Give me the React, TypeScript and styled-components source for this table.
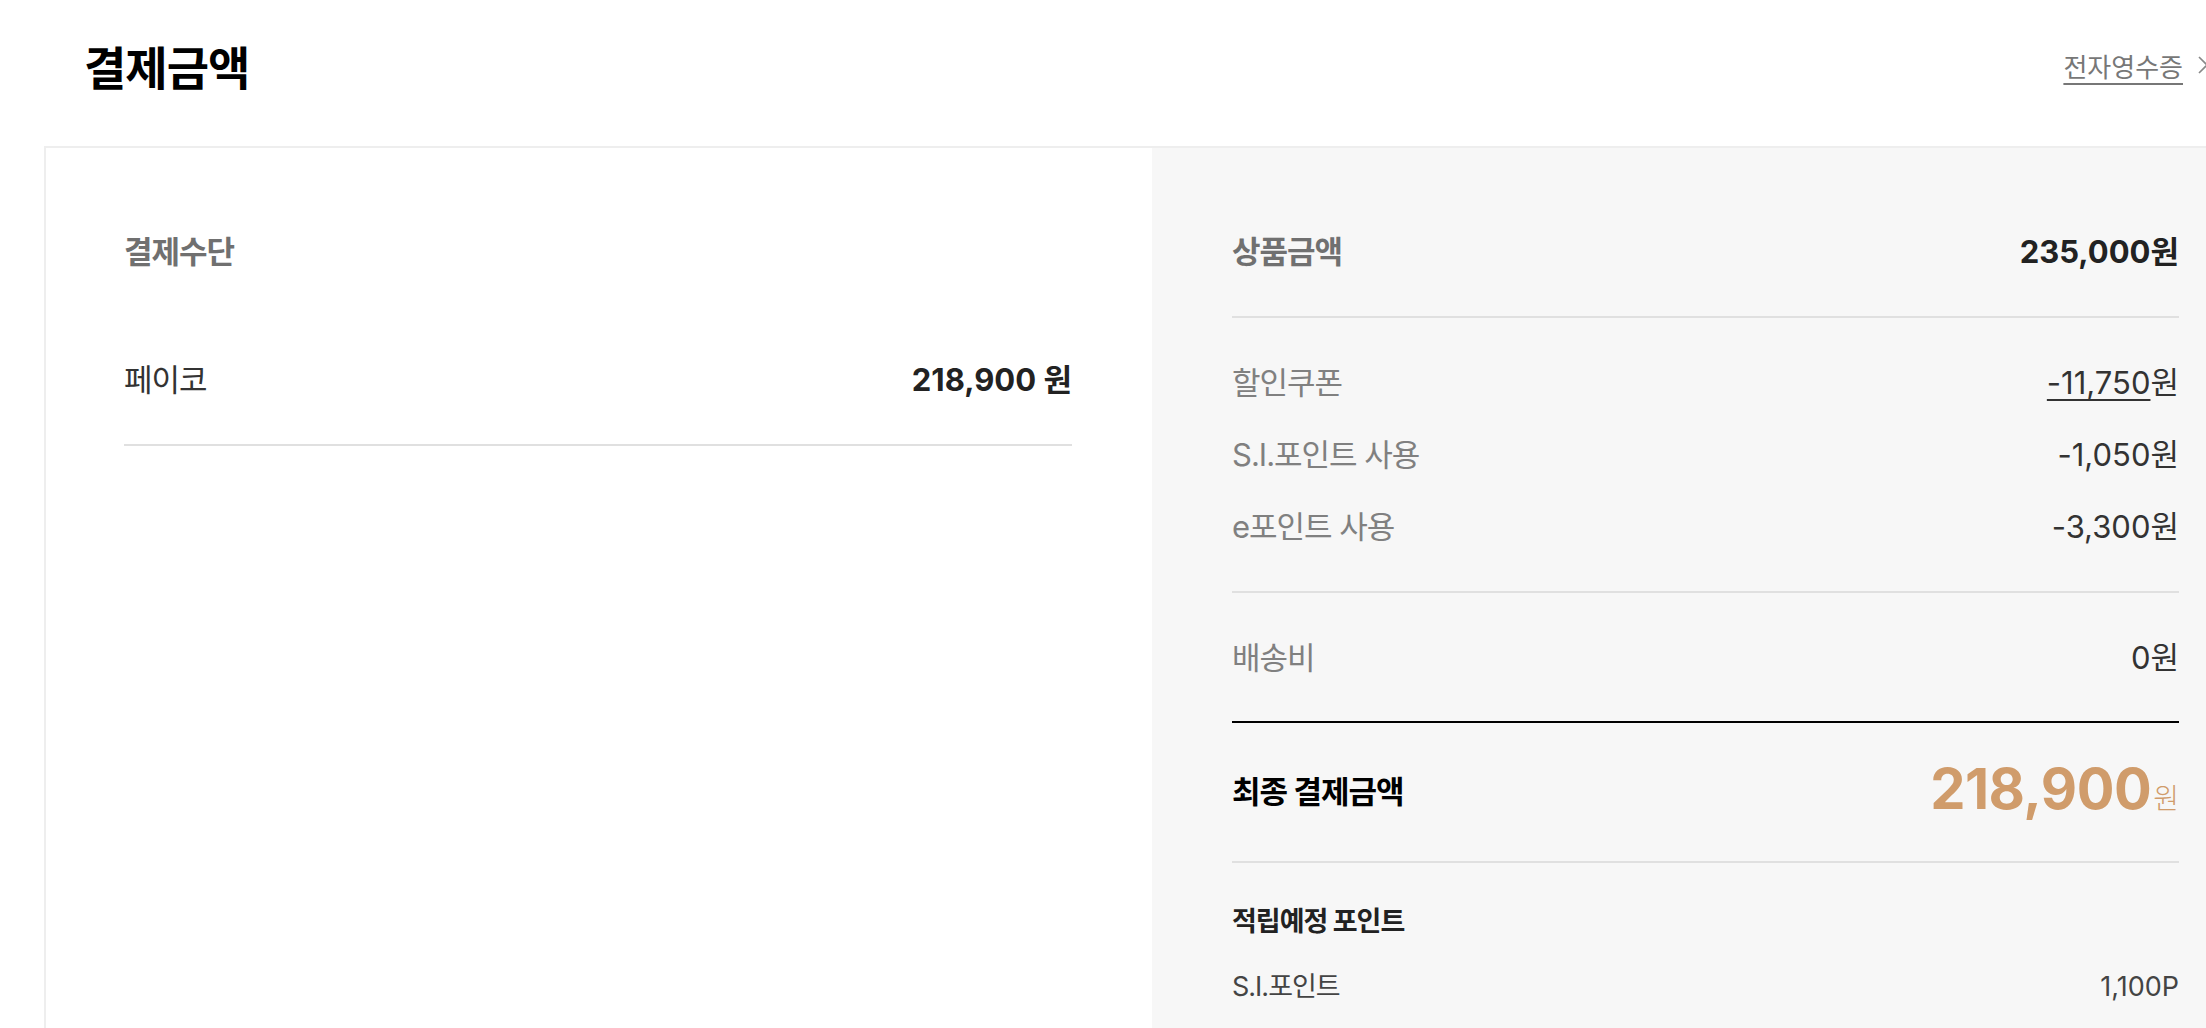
import React from "react";
import styled, { createGlobalStyle } from "styled-components";

const GlobalStyle = createGlobalStyle`
  html, body {
    margin: 0;
    padding: 0;
    background: #fff;
    overflow: hidden;
  }
  body {
    font-family: "Inter", "Noto Sans CJK KR", sans-serif;
    color: #222;
  }
`;

const Page = styled.div`
  width: 2215px;
  margin-left: 44px;
`;

const Header = styled.div`
  height: 146px;
  display: flex;
  align-items: center;
  justify-content: space-between;
  padding: 0 50px 16px 40px;
  box-sizing: border-box;
`;

const Title = styled.h1`
  margin: 0;
  font-size: 46px;
  font-weight: 700;
  letter-spacing: -1px;
  color: #000;
`;

const ReceiptLink = styled.a`
  display: flex;
  align-items: center;
  gap: 14px;
  font-size: 26px;
  color: #777;
  cursor: pointer;
  span {
    text-decoration: underline;
    text-underline-offset: 6px;
  }
`;

const Box = styled.div`
  display: grid;
  grid-template-columns: 1106px 1fr;
  border-top: 2px solid #eee;
  border-left: 2px solid #eee;
  min-height: 880px;
`;

const LeftPanel = styled.section`
  background: #fff;
  padding: 84px 80px 0 78px;
`;

const RightPanel = styled.section`
  background: #f7f7f7;
  padding: 84px 80px 0 80px;
`;

const SectionTitle = styled.div`
  font-size: 31px;
  line-height: 40px;
  font-weight: 700;
  letter-spacing: -1px;
  color: #707070;
`;

const PayRow = styled.div`
  margin-top: 44px;
  padding: 44px 0;
  display: flex;
  justify-content: space-between;
  align-items: center;
  border-bottom: 2px solid #e0e0e0;
  line-height: 40px;
`;

const Group = styled.div<{ $line?: "light" | "dark"; $top?: number; $bottom?: number }>`
  padding: ${(p) => p.$top ?? 44}px 0 ${(p) => p.$bottom ?? 44}px;
  border-bottom: ${(p) => (p.$line === "dark" ? "2px solid #000" : "2px solid #e0e0e0")};
  display: flex;
  flex-direction: column;
  gap: 32px;
`;

const Row = styled.div`
  display: flex;
  justify-content: space-between;
  align-items: center;
  line-height: 40px;
`;

const Label = styled.span<{ $bold?: boolean }>`
  font-size: 31px;
  letter-spacing: -1px;
  font-weight: ${(p) => (p.$bold ? 700 : 400)};
  color: ${(p) => (p.$bold ? "#707070" : "#808080")};
`;

const PlainLabel = styled.span`
  font-size: 31px;
  letter-spacing: -1px;
  color: #333;
`;

const Value = styled.span<{ $bold?: boolean }>`
  font-size: 31px;
  font-weight: ${(p) => (p.$bold ? 700 : 400)};
  color: ${(p) => (p.$bold ? "#222" : "#333")};
  u {
    text-underline-offset: 5px;
    text-decoration-thickness: 1.5px;
  }
`;

const TotalRow = styled.div`
  height: 140px;
  padding-bottom: 6px;
  box-sizing: border-box;
  display: flex;
  justify-content: space-between;
  align-items: center;
  border-bottom: 2px solid #e0e0e0;
`;

const TotalLabel = styled.span`
  font-size: 31px;
  font-weight: 700;
  letter-spacing: -1px;
  color: #000;
`;

const TotalValue = styled.span`
  display: flex;
  align-items: baseline;
  color: #d09c6b;
  strong {
    font-size: 56px;
    font-weight: 700;
    letter-spacing: -0.5px;
  }
  small {
    font-size: 28px;
    font-weight: 300;
    margin-left: 2px;
  }
`;

const PointTitle = styled.div`
  padding-top: 41px;
  font-size: 27px;
  line-height: 36px;
  font-weight: 700;
  letter-spacing: -1px;
  color: #222;
`;

const PointRow = styled(Row)`
  margin-top: 29px;
  line-height: 36px;
  font-size: 27px;
  color: #444;
  span:first-child {
    letter-spacing: -1px;
  }
`;

const Chevron = () => (
  <svg width="12" height="20" viewBox="0 0 12 20" fill="none">
    <path d="M2 2l8 8-8 8" stroke="#888" strokeWidth="1.6" />
  </svg>
);

export default function App() {
  return (
    <>
      <GlobalStyle />
      <Page>
        <Header>
          <Title>결제금액</Title>
          <ReceiptLink>
            <span>전자영수증</span>
            <Chevron />
          </ReceiptLink>
        </Header>
        <Box>
          <LeftPanel>
            <SectionTitle>결제수단</SectionTitle>
            <PayRow>
              <PlainLabel>페이코</PlainLabel>
              <Value $bold>218,900 원</Value>
            </PayRow>
          </LeftPanel>
          <RightPanel>
            <Group $top={0}>
              <Row>
                <Label $bold>상품금액</Label>
                <Value $bold>235,000원</Value>
              </Row>
            </Group>
            <Group $top={45}>
              <Row>
                <Label>할인쿠폰</Label>
                <Value>
                  <u>-11,750</u>원
                </Value>
              </Row>
              <Row>
                <Label>S.I.포인트 사용</Label>
                <Value>-1,050원</Value>
              </Row>
              <Row>
                <Label>e포인트 사용</Label>
                <Value>-3,300원</Value>
              </Row>
            </Group>
            <Group $top={45} $bottom={43} $line="dark">
              <Row>
                <Label>배송비</Label>
                <Value>0원</Value>
              </Row>
            </Group>
            <TotalRow>
              <TotalLabel>최종 결제금액</TotalLabel>
              <TotalValue>
                <strong>218,900</strong>
                <small>원</small>
              </TotalValue>
            </TotalRow>
            <PointTitle>적립예정 포인트</PointTitle>
            <PointRow>
              <span>S.I.포인트</span>
              <span>1,100P</span>
            </PointRow>
          </RightPanel>
        </Box>
      </Page>
    </>
  );
}
